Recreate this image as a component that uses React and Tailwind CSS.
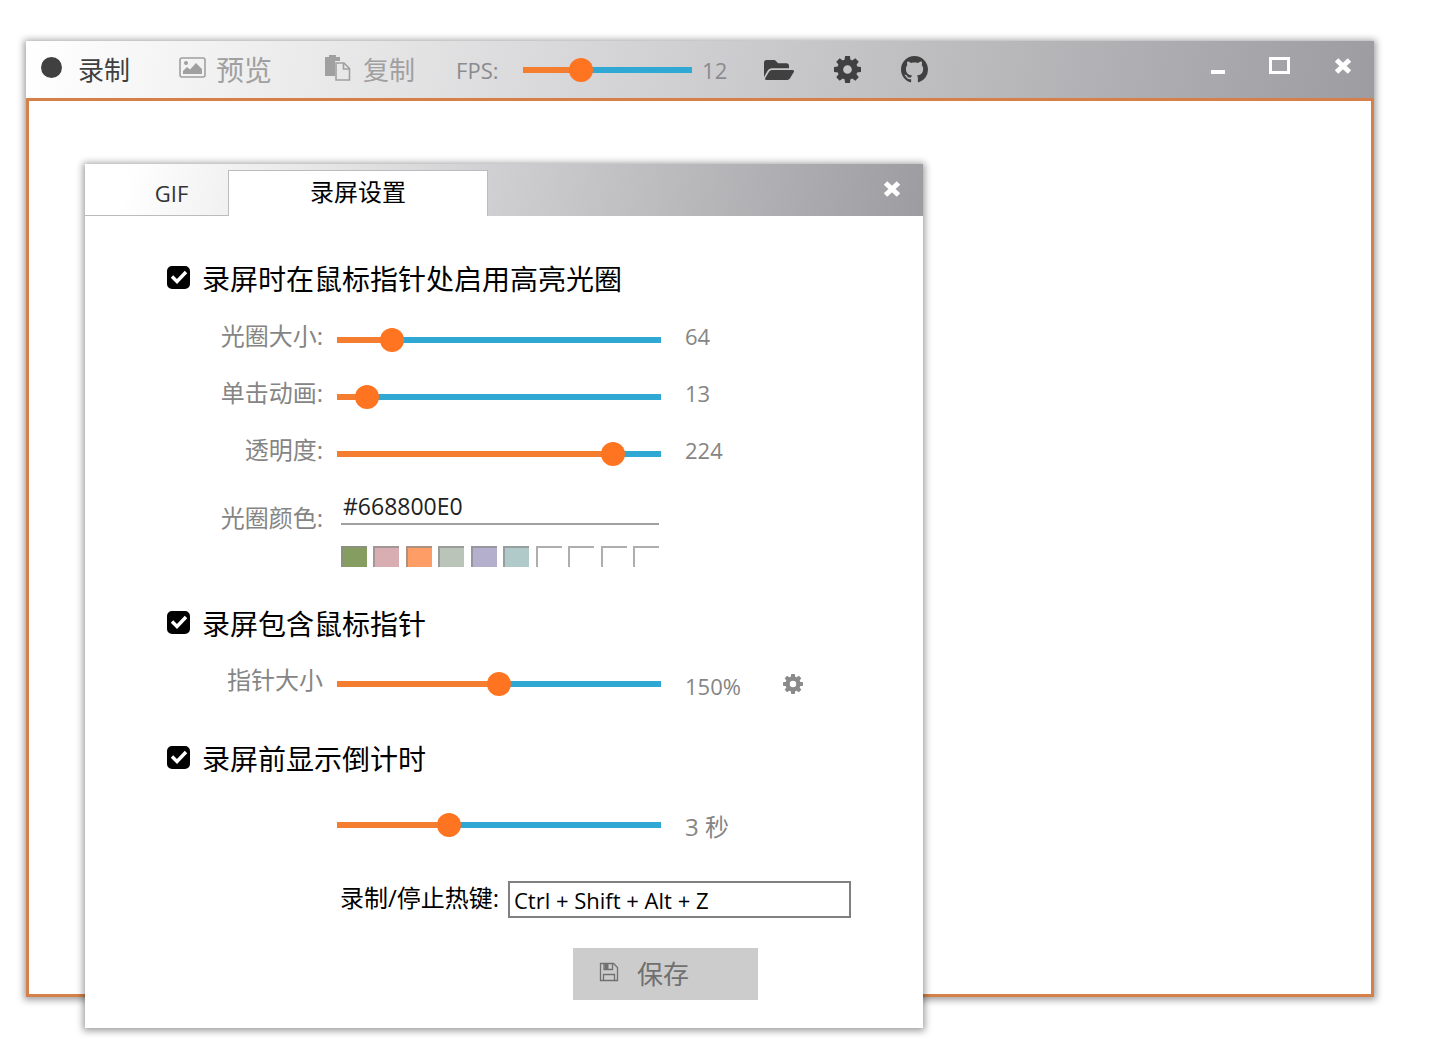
import React, { useState } from 'react';
import { FaFolderOpen } from 'react-icons/fa';
import { BsGithub } from 'react-icons/bs';

const teeth = [0, 45, 90, 135, 180, 225, 270, 315];

const swatches = ['#869d62', '#d9aeb2', '#ff9d66', '#bbc4b9', '#b3afcd', '#b0cac9', '#ffffff', '#ffffff', '#ffffff', '#ffffff'];

function CogIcon({ className }) {
    return (
        <svg viewBox="0 0 26 26" className={className} fill="currentColor" aria-hidden="true">
            <circle cx="13" cy="13" r="7" fill="none" stroke="currentColor" strokeWidth="5.6" />
            {teeth.map((angle) => (
                <path key={angle} d="M10 4.5 10.700 0h4.600l0.700 4.500z" transform={`rotate(${angle} 13 13)`} />
            ))}
        </svg>
    );
}

function ImageIcon({ className }) {
    return (
        <svg viewBox="0 0 27 21" className={className} aria-hidden="true">
            <rect x="1" y="1" width="25" height="19" rx="2" fill="none" stroke="currentColor" strokeWidth="1.6" />
            <circle cx="7" cy="6" r="2" fill="currentColor" />
            <path d="M4 17v-3l4-4 3 2.500L17 6l6 6v5z" fill="currentColor" />
        </svg>
    );
}

function PasteIcon({ className }) {
    return (
        <svg viewBox="0 0 26 26" className={className} aria-hidden="true">
            <path d="M0 2h4V0h7v2h4v4h-5v15H0z" fill="currentColor" />
            <path d="M11 8h8l5.500 5.500V25H11zM18.500 8v6h6" fill="none" stroke="currentColor" strokeWidth="1.6" />
        </svg>
    );
}

function SaveIcon({ className }) {
    return (
        <svg viewBox="0 0 20 20" className={className} fill="none" stroke="currentColor" aria-hidden="true">
            <path d="M1.5 1.5h13l4 4v13h-17z" strokeWidth="1.3" />
            <path d="M5 1.5v6h8.500v-6M4.500 18.500v-6h11v6" strokeWidth="1.3" />
            <path d="M5.500 2h4v5h-4z" fill="currentColor" stroke="none" />
        </svg>
    );
}

function CloseIcon({ className }) {
    return (
        <svg viewBox="0 0 18 16" className={className} fill="none" stroke="currentColor" strokeWidth="5" aria-hidden="true">
            <path d="M2.500 2 15.500 14M15.500 2 2.500 14" />
        </svg>
    );
}

function Slider({ id, label, min, max, value, onChange }) {
    const pct = ((value - min) / (max - min)) * 100;
    return (
        <input
            id={id}
            type="range"
            aria-label={label}
            min={min}
            max={max}
            value={value}
            onChange={(e) => onChange(Number(e.target.value))}
            className="block h-[6px] w-full cursor-pointer appearance-none outline-none [&::-webkit-slider-thumb]:size-6 [&::-webkit-slider-thumb]:appearance-none [&::-webkit-slider-thumb]:rounded-full [&::-webkit-slider-thumb]:bg-[#ff7420]"
            style={{ background: `linear-gradient(to right, #f47d30 ${pct}%, #2fa8d3 ${pct}%)` }}
        />
    );
}

function SliderRow({ id, label, ariaLabel, min, max, initial, format = (v) => v, valueClass = 'pb-2 text-[22px]', children }) {
    const [value, setValue] = useState(initial);
    return (
        <div className="flex h-[57px] items-center">
            <label htmlFor={id} className="w-[238px] pb-2 text-right text-[24px] leading-8 text-[#858585]">{label}</label>
            <div className="ml-[14px] w-[324px]">
                <Slider id={id} label={ariaLabel} min={min} max={max} value={value} onChange={setValue} />
            </div>
            <output htmlFor={id} className={`ml-6 w-[98px] leading-8 text-[#858585] ${valueClass}`}>{format(value)}</output>
            {children}
        </div>
    );
}

function CheckRow({ label }) {
    const [checked, setChecked] = useState(true);
    return (
        <label className="flex h-[50px] items-center gap-3 pl-[82px] text-[28px] leading-10 text-black">
            <span className="mb-1 grid size-[23px] place-items-center">
                <input
                    type="checkbox"
                    checked={checked}
                    onChange={(e) => setChecked(e.target.checked)}
                    className="peer col-start-1 row-start-1 size-[23px] appearance-none rounded-[5px] border-2 border-black checked:bg-black"
                />
                <svg viewBox="0 0 18 18" className="pointer-events-none invisible col-start-1 row-start-1 size-[18px] peer-checked:visible" fill="none" stroke="white" strokeWidth="3.4" aria-hidden="true">
                    <path d="M2 8.500 7 13.500 16 4" />
                </svg>
            </span>
            {label}
        </label>
    );
}

function Toolbar() {
    const [fps, setFps] = useState(12);
    return (
        <header className="flex h-[57px] items-center bg-[linear-gradient(100deg,#ffffff_0%,#d2d2d4_46%,#9d9ca0_100%)] pr-[22px] pl-[15px] text-[26px] leading-8">
            <button type="button" className="flex items-center gap-4 text-[#404040]">
                <span className="mb-1 size-[21px] rounded-full bg-[#404040]" />
                录制
            </button>
            <button type="button" className="ml-[49px] flex items-center gap-[10px] text-[28px] text-[#a0a0a0]">
                <ImageIcon className="mb-1 h-[21px] w-[27px]" />
                预览
            </button>
            <button type="button" className="ml-[53px] flex items-center gap-3 text-[#a0a0a0]">
                <PasteIcon className="mb-1 size-[26px]" />
                复制
            </button>
            <label htmlFor="fps" className="ml-[41px] w-[67px] text-[22px] text-[#8b8b8f]">FPS:</label>
            <div className="w-[169px]">
                <Slider id="fps" min={5} max={27} value={fps} onChange={setFps} />
            </div>
            <output htmlFor="fps" className="ml-[10px] w-[62px] text-[22px] text-[#8b8b8f]">{fps}</output>
            <div className="flex items-center gap-[40px] text-[#404040]">
                <button type="button" aria-label="打开文件夹"><FaFolderOpen className="size-[30px]" /></button>
                <button type="button" aria-label="设置"><CogIcon className="size-[27px]" /></button>
                <button type="button" aria-label="GitHub"><BsGithub className="size-[27px]" /></button>
            </div>
            <div className="mb-2 ml-auto flex items-center gap-[44px] text-white">
                <button type="button" aria-label="最小化" className="flex h-[17px] w-[14px] items-end">
                    <span className="h-1 w-full bg-white" />
                </button>
                <button type="button" aria-label="最大化" className="h-[17px] w-[21px] border-3 border-white" />
                <button type="button" aria-label="关闭"><CloseIcon className="h-4 w-[18px]" /></button>
            </div>
        </header>
    );
}

function SettingsDialog() {
    const [color, setColor] = useState('#668800E0');
    const [hotkey, setHotkey] = useState('Ctrl + Shift + Alt + Z');

    return (
        <section role="dialog" aria-label="录屏设置" className="absolute top-[164px] left-[85px] w-[838px] bg-white pb-7 shadow-[0_1px_7px_2px_rgba(0,0,0,0.38)]">
            <div className="flex h-[52px] items-end bg-[linear-gradient(100deg,#ffffff_5%,#d0d0d2_48%,#9d9ca0_100%)]">
                <div role="tablist" className="flex items-end text-[24px] leading-8 text-black">
                    <button type="button" role="tab" aria-selected="false" className="h-[46px] w-[143px] border-b border-[#bcbcc0] pl-[30px] text-[22px] text-[#333333]">GIF</button>
                    <button type="button" role="tab" aria-selected="true" className="h-[46px] w-[260px] border-x border-t border-[#bcbcc0] bg-white pb-1">录屏设置</button>
                </div>
                <button type="button" aria-label="关闭" className="mr-[22px] mb-[19px] ml-auto text-white">
                    <CloseIcon className="h-4 w-[18px]" />
                </button>
            </div>

            <div className="pt-[38px]">
                <CheckRow label="录屏时在鼠标指针处启用高亮光圈" />
                <div className="mt-[7px]">
                    <SliderRow id="ring-size" label="光圈大小:" min={32} max={256} initial={64} />
                    <SliderRow id="click-anim" label="单击动画:" min={10} max={60} initial={13} />
                    <SliderRow id="opacity" label="透明度:" min={0} max={255} initial={224} />
                </div>

                {/* Cor do anel + paleta */}
                <div className="flex pt-[6px]">
                    <label htmlFor="ring-color" className="w-[238px] pt-[14px] text-right text-[24px] leading-8 text-[#858585]">光圈颜色:</label>
                    <div className="ml-[18px] w-[318px]">
                        <input
                            id="ring-color"
                            type="text"
                            value={color}
                            onChange={(e) => setColor(e.target.value)}
                            className="block h-[37px] w-full border-b-2 border-[#a0a0a0] px-[2px] text-[23px] leading-8 text-[#222222] outline-none"
                        />
                        <div className="mt-[21px] flex justify-between">
                            {swatches.map((c, i) => (
                                <button
                                    key={i}
                                    type="button"
                                    aria-label={`颜色 ${i + 1}`}
                                    className="h-[21px] w-[26px] border-t-2 border-l-2 border-[#8c8c8c]/70"
                                    style={{ backgroundColor: c }}
                                />
                            ))}
                        </div>
                    </div>
                </div>

                <div className="mt-8">
                    <CheckRow label="录屏包含鼠标指针" />
                    <div className="mt-[6px]">
                        <SliderRow id="pointer-size" label="指针大小" min={100} max={200} initial={150} format={(v) => `${v}%`} valueClass="pt-1 text-[22px]">
                            <button type="button" aria-label="指针设置" className="text-[#8a8a8a]"><CogIcon className="size-5" /></button>
                        </SliderRow>
                    </div>
                </div>

                <div className="mt-[22px]">
                    <CheckRow label="录屏前显示倒计时" />
                    <div className="mt-3">
                        <SliderRow id="countdown" ariaLabel="倒计时" min={0} max={9} initial={3} format={(v) => `${v} 秒`} valueClass="pt-1 text-[24px]" />
                    </div>
                </div>

                <div className="mt-7 flex items-center">
                    <label htmlFor="hotkey" className="ml-[255px] w-[168px] pb-1 text-[24px] leading-8 whitespace-nowrap text-black">录制/停止热键:</label>
                    <input
                        id="hotkey"
                        type="text"
                        value={hotkey}
                        onChange={(e) => setHotkey(e.target.value)}
                        className="h-[37px] w-[343px] border-2 border-[#808080] px-1 text-[22px] leading-8 text-black outline-none"
                    />
                </div>

                <button type="button" className="mt-[30px] ml-[488px] flex h-[52px] w-[185px] items-center gap-[18px] bg-[#cccccc] pl-[26px] text-[26px] leading-8 text-[#707070]">
                    <SaveIcon className="mb-1 size-5" />
                    保存
                </button>
            </div>
        </section>
    );
}

export default function App() {
    return (
        <div className="relative min-h-screen bg-white px-[26px] pt-[41px] pr-[66px] font-['Open_Sans','Noto_Sans_CJK_SC',sans-serif]">
            <div className="shadow-[0_1px_7px_2px_rgba(0,0,0,0.38)]">
                <Toolbar />
                <main className="h-[899px] border-3 border-[#d58048] bg-white" />
            </div>
            <SettingsDialog />
        </div>
    );
}
